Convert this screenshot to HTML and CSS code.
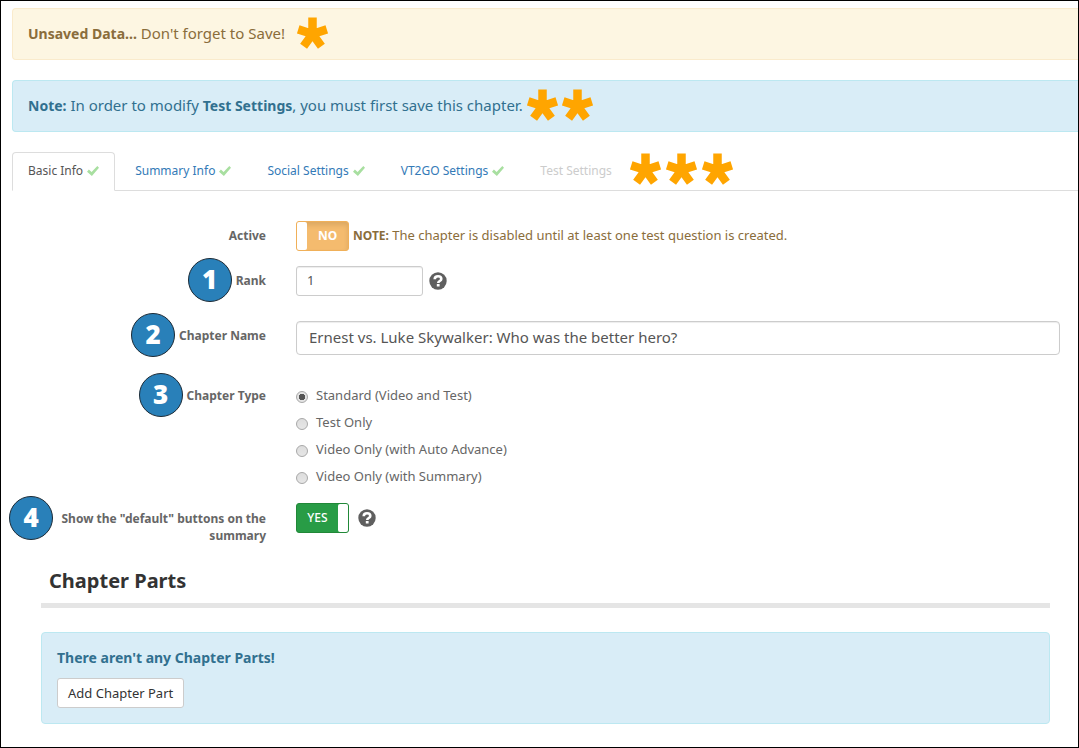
FILE: index.html
```html
<!DOCTYPE html>
<html lang="en">
<head>
<meta charset="utf-8">
<title>Chapter</title>
<meta name="viewport" content="width=device-width, initial-scale=1">
<link rel="stylesheet" href="styles.css">
</head>
<body>
<svg class="defs" aria-hidden="true">
  <symbol id="star" viewBox="0 0 31 32"><path d="M15.500 17V.5M15.500 17 1.200 12.400M15.500 17 29.800 12.400M15.500 17 6.600 29.300M15.500 17 24.400 29.300" fill="none" stroke="currentColor" stroke-width="8.500"/></symbol>
  <symbol id="check" viewBox="0 0 12 10"><path d="M0 5.7 1.9 3.6 4.6 6 10.3 0 12 1.8 4.9 10Z"/></symbol>
  <symbol id="help" viewBox="0 0 18 18"><circle cx="9" cy="9" r="8.7"/><path d="M5.700 7.200C5.800 4.900 7.300 4.300 9 4.300c1.900 0 3.300 1 3.300 2.600 0 2.100-3.100 2.100-3.100 4.100" fill="none" stroke="#fff" stroke-width="2.600"/><path d="M7.800 12h2.800v2.500H7.800z" fill="#fff"/></symbol>
</svg>
<main class="page">
  <div class="alert alert-warning"><span><strong>Unsaved Data...</strong> Don't forget to Save!</span><span class="stars stars-spaced"><svg class="star"><use href="#star"/></svg></span></div>
  <div class="alert alert-info"><span><strong>Note:</strong> In order to modify <strong>Test Settings</strong>, you must first save this chapter.</span><span class="stars"><svg class="star"><use href="#star"/></svg><svg class="star"><use href="#star"/></svg></span></div>

  <nav class="tabs">
    <a class="tab active" href="#basic">Basic Info <svg class="check"><use href="#check"/></svg></a>
    <a class="tab" href="#summary">Summary Info <svg class="check"><use href="#check"/></svg></a>
    <a class="tab" href="#social">Social Settings <svg class="check"><use href="#check"/></svg></a>
    <a class="tab" href="#vt2go">VT2GO Settings <svg class="check"><use href="#check"/></svg></a>
    <a class="tab disabled" href="#test" aria-disabled="true">Test Settings</a>
    <span class="stars"><svg class="star"><use href="#star"/></svg><svg class="star"><use href="#star"/></svg><svg class="star"><use href="#star"/></svg></span>
  </nav>

  <form class="form">
    <div class="row">
      <div class="label-cell"><label class="label" for="active">Active</label></div>
      <div class="field">
        <button type="button" id="active" class="switch switch-off" aria-pressed="false"><span class="switch-text">NO</span></button>
        <span class="note"><strong>NOTE:</strong> The chapter is disabled until at least one test question is created.</span>
      </div>
    </div>
    <div class="row">
      <div class="label-cell"><label class="label" for="rank"><span class="badge">1</span>Rank</label></div>
      <div class="field field-help">
        <input id="rank" class="input input-small" type="text" value="1">
        <svg class="help"><use href="#help"/></svg>
      </div>
    </div>
    <div class="row row-name">
      <div class="label-cell"><label class="label" for="name"><span class="badge">2</span>Chapter Name</label></div>
      <div class="field"><input id="name" class="input" type="text" value="Ernest vs. Luke Skywalker: Who was the better hero?"></div>
    </div>
    <div class="row row-type">
      <div class="label-cell"><span class="label" id="type-label"><span class="badge">3</span>Chapter Type</span></div>
      <div class="radios" role="radiogroup" aria-labelledby="type-label">
        <label class="radio"><input type="radio" name="type" checked>Standard (Video and Test)</label>
        <label class="radio"><input type="radio" name="type">Test Only</label>
        <label class="radio"><input type="radio" name="type">Video Only (with Auto Advance)</label>
        <label class="radio"><input type="radio" name="type">Video Only (with Summary)</label>
      </div>
    </div>
    <div class="row row-buttons">
      <div class="label-cell"><label class="label label-wrap" for="buttons"><span class="badge">4</span>Show the "default" buttons on the summary</label></div>
      <div class="field field-switch">
        <button type="button" id="buttons" class="switch switch-on" aria-pressed="true"><span class="switch-text">YES</span></button>
        <svg class="help"><use href="#help"/></svg>
      </div>
    </div>
  </form>

  <section class="parts">
    <h2 class="heading">Chapter Parts</h2>
    <div class="parts-empty">
      <strong>There aren't any Chapter Parts!</strong>
      <button type="button" class="button">Add Chapter Part</button>
    </div>
  </section>
</main>
</body>
</html>
```
FILE: styles.css
```css
* { box-sizing: border-box; }
body {
  margin: 0;
  font: 13px/18px "Noto Sans", "Open Sans", sans-serif;
  color: #555;
  background: #fff;
}
input, button { font: inherit; color: inherit; }
.defs { position: absolute; width: 0; height: 0; }
.page {
  min-height: 100vh;
  padding: 7px 0 23px 11px;
  border: 1px solid #000;
}
.alert {
  display: flex;
  align-items: center;
  gap: 4px;
  height: 52px;
  margin-bottom: 20px;
  padding: 0 15px 2px;
  border: 1px solid;
  border-right: 0;
  border-radius: 4px 0 0 4px;
  font-size: 15px;
  line-height: 20px;
}
.alert strong { font-size: 14px; }
.alert-warning { color: #8a6d3b; background: #fdf6e2; border-color: #faebcc; }
.alert-info { color: #31708f; background: #d9edf7; border-color: #bce8f1; }
.stars {
  display: flex;
  gap: 4px;
  color: #ffa500;
}
.stars-spaced { margin-left: 8px; }
.star { width: 31px; height: 32px; }

.tabs {
  display: flex;
  align-items: center;
  gap: 4px;
  height: 39px;
  border-bottom: 1px solid #ddd;
}
.tabs .stars { gap: 5px; padding-bottom: 4px; }
.tab {
  display: flex;
  align-items: center;
  gap: 4px;
  height: 39px;
  padding: 0 15px;
  border: 1px solid transparent;
  border-radius: 4px 4px 0 0;
  color: #337ab7;
  font-size: 12px;
  text-decoration: none;
}
.tab.active { color: #555; background: #fff; border-color: #ddd #ddd #fff; }
.tab.disabled { padding-right: 13px; color: #ccc; }
.check { width: 12px; height: 10px; fill: #a8dfa0; }

.form { padding: 30px 18px 0 0; }
.row {
  display: grid;
  grid-template-columns: 254px 1fr;
  gap: 30px;
  margin-bottom: 15px;
}
.label-cell { padding-top: 5px; text-align: right; }
.label {
  position: relative;
  display: inline-block;
  color: #666;
  font-size: 12px;
  font-weight: 700;
  line-height: 17px;
}
.label-wrap { width: 209px; }
.badge {
  position: absolute;
  top: -14px;
  right: 100%;
  width: 44px;
  height: 44px;
  margin-right: 4px;
  border: 1px solid #1b2a36;
  border-radius: 50%;
  background: #2980b9;
  color: #fff;
  font-size: 26px;
  font-weight: 900;
  line-height: 40px;
  text-align: center;
}
.field { display: flex; align-items: center; gap: 4px; min-height: 30px; }
.field-help { gap: 6px; }
.field-switch { gap: 9px; align-self: start; }
.note { padding-bottom: 2px; color: #8a6d3b; }
.note strong { font-size: 12px; }
.input {
  width: 100%;
  height: 34px;
  padding: 0 12px 2px;
  border: 1px solid #ccc;
  border-radius: 4px;
  background: #fff;
  box-shadow: inset 0 1px 1px rgba(0, 0, 0, .075);
  font-size: 15px;
}
.input-small { width: 127px; height: 30px; padding: 0 10px 2px; border-radius: 3px; font-size: 13px; }
.help { width: 18px; height: 18px; fill: #5f5f5f; }
.row-name { margin: 25px 0 30px; }
.row-type { margin-bottom: 17px; }
.row-type .label-cell { padding-top: 1px; }
.radios { display: grid; gap: 9px; justify-items: start; padding-top: 1px; }
.radio { display: flex; align-items: center; gap: 8px; color: #666; }
.radio input {
  appearance: none;
  width: 12px;
  height: 12px;
  margin: 4px 0 0;
  border: 1px solid #a8a8a8;
  border-radius: 50%;
  background: linear-gradient(#ddd, #e6e6e6);
}
.radio input:checked { background: radial-gradient(circle, #555 0 3px, #e4e4e4 3px); }
.row-buttons { margin: 18px 0 24px; }
.row-buttons .label-cell { padding-top: 7px; }
.switch {
  display: flex;
  align-items: center;
  width: 53px;
  height: 30px;
  padding: 0;
  border: 1px solid;
  border-radius: 3px;
  color: #fff;
  font-size: 12px;
}
.switch::before { content: ""; width: 10px; height: 28px; background: #fff; border-radius: 2px; }
.switch-text { flex: 1; text-align: center; }
.switch-off { background: #f4bb6e; border-color: #f0b059; box-shadow: inset 0 3px 5px rgba(0, 0, 0, .1); font-weight: 700; }
.switch-on { flex-direction: row-reverse; background: #289c46; border-color: #218838; font-weight: 500; }

.parts { padding: 0 28px 0 29px; }
.heading {
  margin: 0 0 24px;
  padding: 0 8px 9px;
  border-bottom: 5px solid #e5e5e5;
  color: #333;
  font-size: 20px;
  line-height: 26px;
}
.parts-empty {
  display: flex;
  flex-direction: column;
  align-items: flex-start;
  gap: 10px;
  padding: 15px;
  border: 1px solid #bce8f1;
  border-radius: 4px;
  background: #d9edf7;
  color: #31708f;
  font-size: 14px;
  line-height: 20px;
}
.button {
  height: 30px;
  padding: 0 10px 1px;
  border: 1px solid #ccc;
  border-radius: 3px;
  background: #fff;
  color: #333;
  font-size: 13px;
}
```
